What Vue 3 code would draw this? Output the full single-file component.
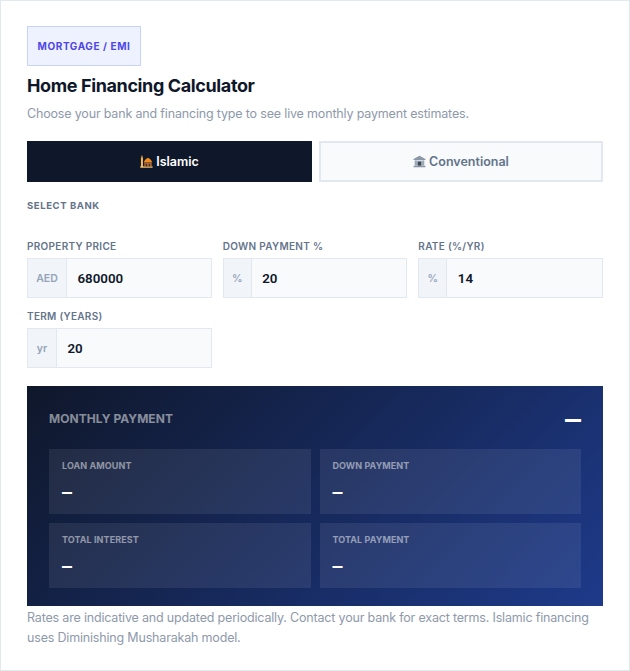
<script setup>
const fields = [
  { label: 'PROPERTY PRICE', unit: 'AED', value: '680000', cls: 'u-aed' },
  { label: 'DOWN PAYMENT %', unit: '%', value: '20', cls: 'u-pct' },
  { label: 'RATE (%/YR)', unit: '%', value: '14', cls: 'u-pct' },
  { label: 'TERM (YEARS)', unit: 'yr', value: '20', cls: 'u-yr' },
]
const tiles = ['LOAN AMOUNT', 'DOWN PAYMENT', 'TOTAL INTEREST', 'TOTAL PAYMENT']
</script>

<template>
  <div class="card">
    <div class="badge">MORTGAGE / EMI</div>
    <h1 class="title">Home Financing Calculator</h1>
    <p class="sub">Choose your bank and financing type to see live monthly payment estimates.</p>

    <div class="tabs">
      <button class="tab active">
        <svg class="ico" viewBox="0 0 14 14" width="13" height="13">
          <rect x="1" y="2.5" width="2.2" height="10.5" fill="#f7b955" />
          <path d="M2.1 0 L3.2 2.5 H1 Z" fill="#e8912c" />
          <rect x="0.3" y="12.2" width="13.2" height="1.5" fill="#f6c36a" />
          <path d="M8.6 3 C11.2 4.6 13 6 13 8.2 H4.2 C4.2 6 6 4.6 8.6 3 Z" fill="#f28a1e" />
          <rect x="4.6" y="8.2" width="8" height="4" fill="#a9683a" />
          <rect x="6.2" y="9.4" width="1.3" height="2.8" fill="#4b2c18" />
          <rect x="9.4" y="9.4" width="1.3" height="2.8" fill="#4b2c18" />
        </svg>
        <span>Islamic</span>
      </button>
      <button class="tab">
        <svg class="ico" viewBox="0 0 14 14" width="13" height="13">
          <path d="M7 0.8 L13.4 4.4 V5.4 H0.6 V4.4 Z" fill="#8a97a6" />
          <rect x="1.6" y="5.8" width="10.8" height="5.8" fill="#c3ccd6" />
          <rect x="2.5" y="6" width="1.4" height="5.4" fill="#8a97a6" />
          <rect x="10.1" y="6" width="1.4" height="5.4" fill="#8a97a6" />
          <rect x="5" y="7" width="4" height="4.6" fill="#3e4a58" />
          <rect x="0.6" y="11.6" width="12.8" height="1.6" fill="#8a97a6" />
        </svg>
        <span>Conventional</span>
      </button>
    </div>

    <div class="section">SELECT BANK</div>

    <div class="fields">
      <div v-for="f in fields" :key="f.label" class="field">
        <label class="label">{{ f.label }}</label>
        <div class="input">
          <span class="unit" :class="f.cls">{{ f.unit }}</span>
          <span class="value">{{ f.value }}</span>
        </div>
      </div>
    </div>

    <div class="panel">
      <div class="head">
        <span class="head-label">MONTHLY PAYMENT</span>
        <span class="head-value">–</span>
      </div>
      <div class="tiles">
        <div v-for="t in tiles" :key="t" class="tile">
          <div class="tile-label">{{ t }}</div>
          <div class="tile-value">–</div>
        </div>
      </div>
    </div>

    <p class="note">Rates are indicative and updated periodically. Contact your bank for exact terms. Islamic financing uses Diminishing Musharakah model.</p>
  </div>
</template>

<style>
html, body { margin: 0; background: #fff; }
</style>

<style scoped>
.card {
  box-sizing: border-box;
  width: 630px;
  height: 671px;
  border: 1px solid #e2e8f0;
  padding: 25px 26px 0;
  background: #fff;
  font-family: Inter, "Liberation Sans", sans-serif;
}
.badge {
  box-sizing: border-box;
  width: 114px;
  height: 40px;
  display: flex;
  align-items: center;
  justify-content: center;
  background: #eef2ff;
  border: 1px solid #c7d2fe;
  color: #4f46e5;
  font-size: 10px;
  font-weight: 700;
  letter-spacing: 0.6px;
  white-space: nowrap;
}
.title {
  margin: 8px 0 0;
  font-size: 18px;
  line-height: 24px;
  font-weight: 700;
  letter-spacing: -0.38px;
  color: #0f172a;
}
.sub {
  margin: 7px 0 0;
  font-size: 12.5px;
  line-height: 18px;
  letter-spacing: -0.17px;
  color: #8e99ab;
  white-space: nowrap;
}
.tabs {
  margin-top: 18px;
  display: grid;
  grid-template-columns: 285px 284px;
  gap: 7px;
}
.tab {
  box-sizing: border-box;
  height: 41px;
  display: flex;
  align-items: center;
  justify-content: center;
  gap: 3px;
  padding: 0;
  border: 2px solid #e2e8f0;
  background: #f8fafc;
  color: #64748b;
  font-family: inherit;
  font-size: 12.5px;
  font-weight: 600;
}
.tab.active {
  border-color: #0f172a;
  background: #0f172a;
  color: #fff;
}
.section {
  margin-top: 18px;
  font-size: 9.5px;
  line-height: 12px;
  font-weight: 700;
  letter-spacing: 0.6px;
  color: #64748b;
}
.fields {
  margin-top: 28px;
  display: grid;
  grid-template-columns: repeat(3, 1fr);
  column-gap: 11px;
  row-gap: 12px;
}
.label {
  display: block;
  height: 12px;
  margin-bottom: 6px;
  font-size: 10px;
  line-height: 12px;
  font-weight: 600;
  letter-spacing: 0.3px;
  color: #64748b;
}
.input {
  box-sizing: border-box;
  height: 40px;
  display: flex;
  align-items: stretch;
  border: 1px solid #e2e8f0;
  background: #f8fafc;
}
.unit {
  box-sizing: border-box;
  display: flex;
  align-items: center;
  justify-content: center;
  background: #f1f5f9;
  border-right: 1px solid #e2e8f0;
  color: #94a3b8;
  font-size: 10.5px;
  font-weight: 600;
}
.u-aed { width: 39px; }
.u-pct { width: 28px; }
.u-yr { width: 29px; }
.value {
  display: flex;
  align-items: center;
  padding-left: 10.5px;
  font-family: Roboto, "Liberation Sans", sans-serif;
  font-size: 13.33px;
  font-weight: 600;
  color: #0f172a;
}
.panel {
  box-sizing: border-box;
  margin-top: 18px;
  height: 220px;
  padding: 22px;
  background: linear-gradient(135deg, #0f172a 0%, #1e3a8a 100%);
}
.head {
  height: 20px;
  margin-bottom: 21px;
  display: flex;
  align-items: center;
  justify-content: space-between;
}
.head-label {
  padding-top: 2px;
  font-size: 12px;
  line-height: 18px;
  font-weight: 700;
  letter-spacing: 0.06px;
  color: rgba(255, 255, 255, 0.5);
}
.head-value {
  padding-top: 2px;
  font-size: 32px;
  line-height: 18px;
  font-weight: 500;
  color: #fff;
}
.tiles {
  display: grid;
  grid-template-columns: repeat(2, 1fr);
  gap: 9px;
}
.tile {
  box-sizing: border-box;
  height: 65px;
  padding: 11px 13px 0;
  background: rgba(255, 255, 255, 0.08);
}
.tile-label {
  font-size: 9px;
  line-height: 12px;
  font-weight: 700;
  letter-spacing: 0.08px;
  color: rgba(255, 255, 255, 0.5);
}
.tile-value {
  margin-top: 10px;
  font-size: 20px;
  line-height: 20px;
  font-weight: 600;
  color: #fff;
}
.note {
  margin: 2px 0 0;
  font-size: 12.5px;
  line-height: 20px;
  letter-spacing: -0.18px;
  color: #8e99ab;
}
</style>
